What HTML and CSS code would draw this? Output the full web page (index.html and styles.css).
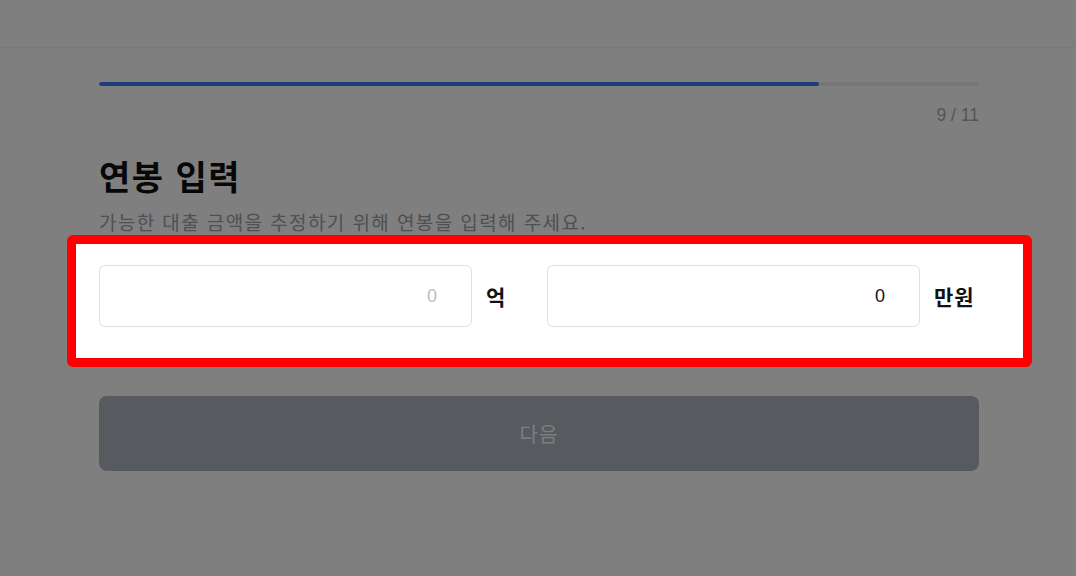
FILE: index.html
```html
<!DOCTYPE html>
<html lang="ko">
<head>
<meta charset="utf-8">
<title>연봉 입력</title>
<link rel="stylesheet" href="styles.css">
</head>
<body>
<header class="topbar"></header>
<main class="page">
  <div class="progress"><div class="progress-fill" style="width: 81.8%"></div></div>
  <div class="step-count">9 / 11</div>
  <h1 class="title">연봉 입력</h1>
  <p class="subtitle">가능한 대출 금액을 추정하기 위해 연봉을 입력해 주세요.</p>
  <section class="spotlight">
    <div class="amount-row">
      <label class="amount-group">
        <input class="amount-input" type="text" placeholder="0">
        <span class="amount-unit">억</span>
      </label>
      <label class="amount-group">
        <input class="amount-input" type="text" value="0">
        <span class="amount-unit">만원</span>
      </label>
    </div>
  </section>
  <button class="next-btn" type="button" disabled>다음</button>
</main>
<div class="dim"></div>
</body>
</html>
```
FILE: styles.css
```css
* { box-sizing: border-box; }

html, body {
  margin: 0;
  padding: 0;
  background: #ffffff;
  font-family: "Noto Sans CJK KR", "Noto Sans", sans-serif;
  color: #111111;
}

.topbar {
  height: 48px;
  border-bottom: 1px solid #f2f2f2;
}

.page {
  width: 880px;
  margin-left: calc(50% - 439px);
  padding-top: 34px;
}

.progress {
  height: 4px;
  border-radius: 2px;
  background: #ececec;
  overflow: hidden;
}

.progress-fill {
  height: 100%;
  background: #4275fa;
  border-radius: 2px;
}

.step-count {
  margin-top: 19px;
  text-align: right;
  font-family: "Liberation Sans", Arial, sans-serif;
  font-size: 17.5px;
  line-height: 20px;
  color: #aaaaaa;
}

.title {
  margin: 31px 0 0;
  font-size: 34px;
  line-height: 40px;
  font-weight: 700;
  letter-spacing: 1.5px;
  color: #111111;
}

.subtitle {
  margin: 13px 0 0;
  font-size: 19px;
  line-height: 26px;
  letter-spacing: 1.4px;
  color: #9aa0aa;
}

.spotlight {
  position: relative;
  z-index: 20;
  margin: 0 -53px 0 -32px;
  padding: 21px 44px 31px 23px;
  background: #ffffff;
  border: 9px solid #ff0000;
  border-radius: 6px;
}

.amount-row {
  display: grid;
  grid-template-columns: 1fr 1fr;
  column-gap: 16px;
}

.amount-group {
  display: grid;
  grid-template-columns: 1fr 45px;
  column-gap: 14px;
  align-items: center;
}

.amount-input {
  width: 100%;
  height: 62px;
  margin: 0;
  padding: 0 34px 0 16px;
  border: 1px solid #dedede;
  border-radius: 6px;
  background: #ffffff;
  font-family: "Liberation Sans", Arial, sans-serif;
  font-size: 18px;
  color: #111111;
  text-align: right;
  outline: none;
}

.amount-input::placeholder {
  color: #b9bdc4;
}

.amount-unit {
  font-size: 21px;
  font-weight: 700;
  letter-spacing: 1px;
  color: #111111;
  white-space: nowrap;
}

.next-btn {
  display: block;
  width: 100%;
  height: 75px;
  margin-top: 29px;
  border: 0;
  border-radius: 8px;
  background: #aeb4bd;
  color: #fafcff;
  font-family: "Noto Sans CJK KR", "Noto Sans", sans-serif;
  font-size: 20px;
  letter-spacing: 1px;
}

.dim {
  position: fixed;
  inset: 0;
  z-index: 10;
  background: rgba(0, 0, 0, 0.5);
}
```
